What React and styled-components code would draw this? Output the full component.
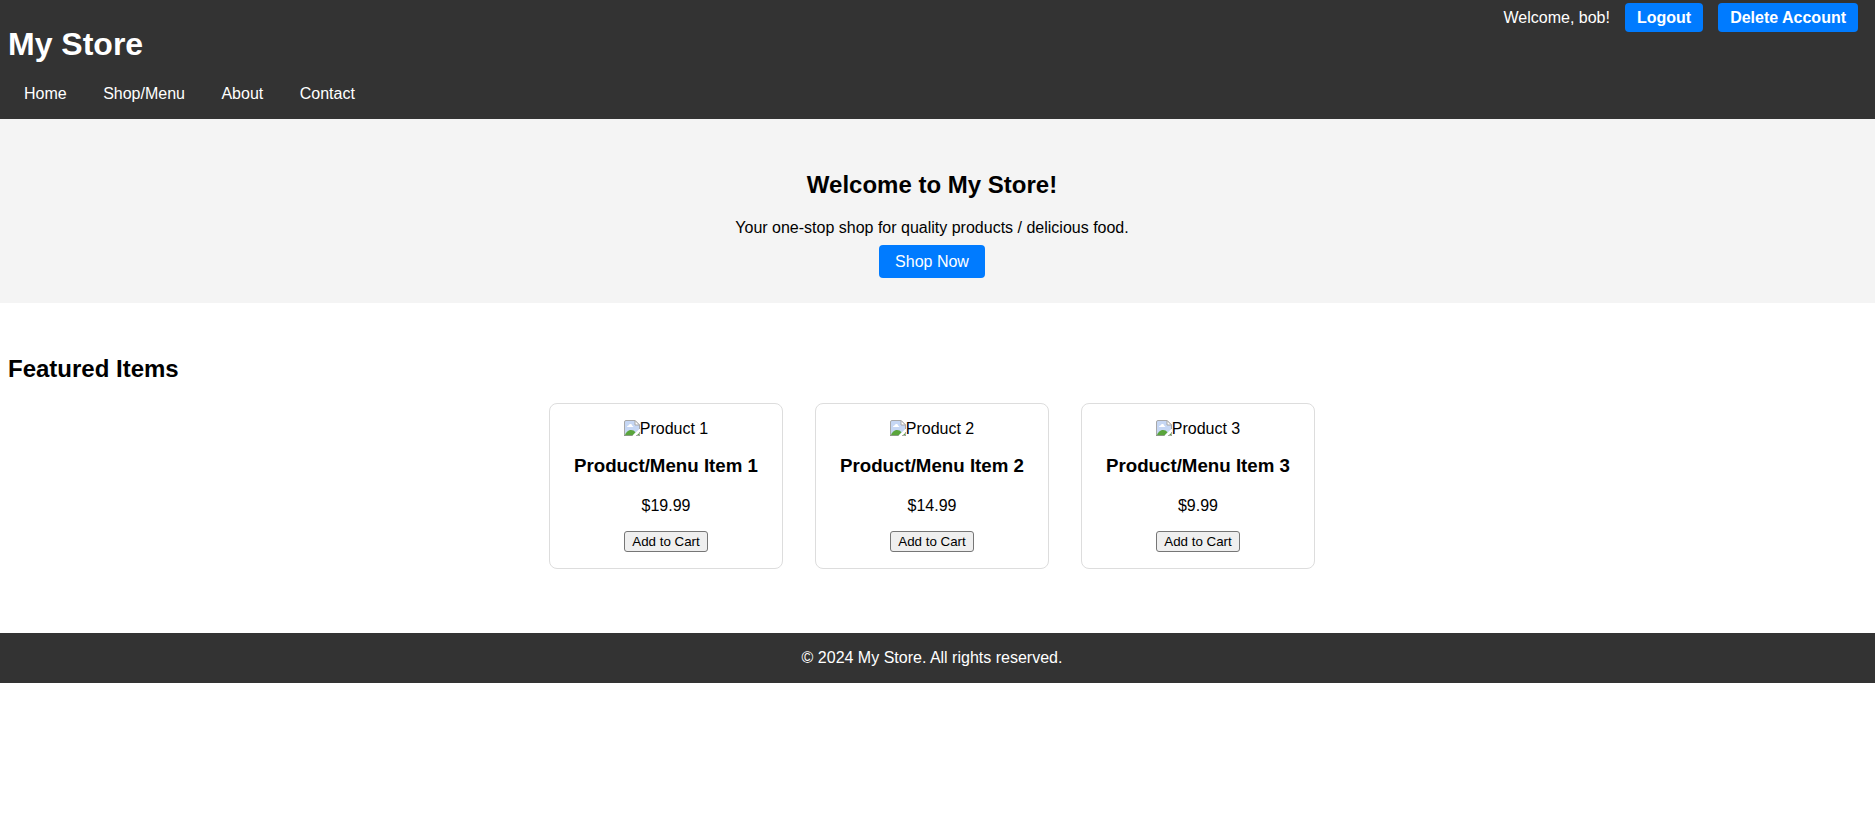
import React from "react";
import styled, { createGlobalStyle } from "styled-components";

const GlobalStyle = createGlobalStyle`
  body {
    margin: 0;
    background: #fff;
    color: #000;
    font-family: Arial, "Liberation Sans", sans-serif;
    font-size: 16px;
    line-height: 18px;
  }
`;

const Header = styled.header`
  display: flex;
  justify-content: space-between;
  align-items: flex-start;
  padding: 0 17px 16px 8px;
  background: #333;
  color: #fff;
`;

const Brand = styled.div`
  padding-top: 26px;
`;

const StoreName = styled.h1`
  margin: 0 0 22px;
  font-size: 32px;
  line-height: 37px;
`;

const NavList = styled.ul`
  margin: 0;
  padding: 0;
  list-style: none;
`;

const NavItem = styled.li`
  display: inline;
  padding: 0 16px;
`;

const NavLink = styled.a`
  color: #fff;
  text-decoration: none;
`;

const Account = styled.div`
  display: flex;
  align-items: center;
  gap: 15px;
  padding-top: 3px;
`;

const AccountButton = styled.button`
  padding: 6px 12px 5px;
  border: 0;
  border-radius: 4px;
  background: #007bff;
  color: #fff;
  font: bold 16px/18px Arial, "Liberation Sans", sans-serif;
  cursor: pointer;
`;

const Hero = styled.section`
  padding: 52px 19px 25px 8px;
  background: #f4f4f4;
  text-align: center;
`;

const SectionTitle = styled.h2`
  margin: 0 0 21px;
  font-size: 24px;
  line-height: 27px;
`;

const HeroText = styled.p`
  margin: 0 0 8px;
`;

const ShopLink = styled.a`
  display: inline-block;
  padding: 8px 16px 7px;
  border-radius: 4px;
  background: #007bff;
  color: #fff;
  text-decoration: none;
  vertical-align: top;
`;

const Featured = styled.section`
  padding: 52px 19px 64px 8px;
`;

const Products = styled.div`
  display: flex;
  flex-wrap: wrap;
  justify-content: center;
  gap: 32px;
`;

const Card = styled.article`
  box-sizing: border-box;
  min-width: 234px;
  padding: 16px 24px;
  border: 1px solid #ddd;
  border-radius: 8px;
  text-align: center;
`;

const Picture = styled.div`
  display: flex;
  justify-content: center;
  margin-bottom: 17px;
`;

const ProductName = styled.h3`
  margin: 0 0 21px;
  line-height: 21px;
`;

const Price = styled.p`
  margin: 0 0 16px;
`;

const CartButton = styled.button`
  display: block;
  margin: 0 auto;
  padding: 1px 7px;
  border: 1px solid #767676;
  border-radius: 3px;
  background: #efefef;
  color: #000;
  font-family: Arial, "Liberation Sans", sans-serif;
  line-height: 17px;
`;

const Footer = styled.footer`
  padding: 16px 19px 16px 8px;
  background: #333;
  color: #fff;
  text-align: center;
`;

const links = ["Home", "Shop/Menu", "About", "Contact"];

const products = [
  { id: 1, price: "$19.99" },
  { id: 2, price: "$14.99" },
  { id: 3, price: "$9.99" },
];

function MissingPicture() {
  return (
    <svg width="16" height="16" viewBox="0 0 16 16" aria-hidden="true">
      <path d="M2 .5H11L15.500 5V9L8.500 15.500H.5V2Q.5.5 2 .5Z" fill="#c6d7f4" />
      <path d="M3 7Q3 5.500 4.500 5.500Q5 3.500 6.800 4Q8.500 4.500 8.300 6Q9.500 6.200 9.300 7Z" fill="#fff" />
      <path d="M1 15Q2.500 11 6 10Q9.500 9.500 11.500 12.200L8.500 15.500H1Z" fill="#5aa53c" />
      <path d="M8.500 16L16 9V11L11 16Z" fill="#fff" />
      <path d="M12 16L16 12.200V16Z" fill="#5aa53c" />
      <path d="M.5 16V2Q.5.5 2 .5H11L15.500 5V9M12 15.500H15.500V12" fill="none" stroke="#a8a8a8" />
      <path d="M11 .5V5H15.500Z" fill="#fff" stroke="#a8a8a8" />
      <path d="M0 15.500H8.500" stroke="#8a9a84" />
    </svg>
  );
}

function ProductCard({ id, price }) {
  return (
    <Card>
      <Picture>
        <MissingPicture />
        <span>Product {id}</span>
      </Picture>
      <ProductName>Product/Menu Item {id}</ProductName>
      <Price>{price}</Price>
      <CartButton type="button">Add to Cart</CartButton>
    </Card>
  );
}

export default function App() {
  return (
    <>
      <GlobalStyle />
      <Header>
        <Brand>
          <StoreName>My Store</StoreName>
          <nav>
            <NavList>
              {links.map((label) => (
                <React.Fragment key={label}>
                  <NavItem>
                    <NavLink href="#">{label}</NavLink>
                  </NavItem>{" "}
                </React.Fragment>
              ))}
            </NavList>
          </nav>
        </Brand>
        <Account>
          <span>Welcome, bob!</span>
          <AccountButton type="button">Logout</AccountButton>
          <AccountButton type="button">Delete Account</AccountButton>
        </Account>
      </Header>
      <main>
        <Hero>
          <SectionTitle>Welcome to My Store!</SectionTitle>
          <HeroText>Your one-stop shop for quality products / delicious food.</HeroText>
          <ShopLink href="#featured">Shop Now</ShopLink>
        </Hero>
        <Featured id="featured">
          <SectionTitle>Featured Items</SectionTitle>
          <Products>
            {products.map((product) => (
              <ProductCard key={product.id} {...product} />
            ))}
          </Products>
        </Featured>
      </main>
      <Footer>© 2024 My Store. All rights reserved.</Footer>
    </>
  );
}
